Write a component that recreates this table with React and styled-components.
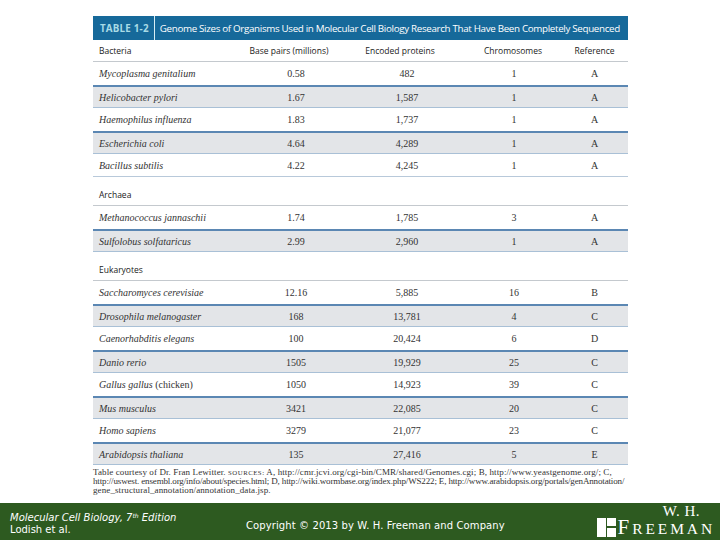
import React from "react";
import styled, { createGlobalStyle } from "styled-components";

// #region - styling -

const GlobalStyle = createGlobalStyle`
  html, body {
    margin: 0;
    padding: 0;
    background: #ffffff;
  }
  #root {
    width: 720px;
    height: 540px;
    overflow: hidden;
  }
`;

const Page = styled.div`
  width: 720px;
  height: 540px;
  display: flex;
  flex-direction: column;
  background: #ffffff;
`;

const Sheet = styled.section`
  width: 535px;
  margin: 16px 0 0 93px;
`;

const TitleBar = styled.div`
  display: flex;
  align-items: stretch;
  height: 24px;
  background: #16699a;
  font-family: "Open Sans", "Liberation Sans", sans-serif;
  font-size: 9.8px;
  white-space: nowrap;
  overflow: hidden;
`;

const TableTag = styled.div`
  display: flex;
  align-items: center;
  padding: 0 5px 0 7px;
  color: #a8dbe6;
  font-weight: 700;
  letter-spacing: 0.2px;
  border-right: 1px solid #d8eef5;
`;

const TitleText = styled.div`
  display: flex;
  align-items: center;
  padding-left: 5px;
  color: #ffffff;
  letter-spacing: -0.33px;
`;

const Row = styled.div`
  display: grid;
  grid-template-columns: 150px 92px 130px 96px 67px;
  align-items: center;
  height: ${(p) => p.$h || 23}px;
  box-sizing: border-box;
  background: ${(p) => (p.$shaded ? "#e3e5e8" : "#ffffff")};
  border-top: ${(p) => (p.$shaded ? "2px solid #5b87b3" : "none")};
  border-bottom: ${(p) =>
    p.$shaded ? "1px solid #a9c0d6" : p.$rule ? `1px solid ${p.$rule}` : "none"};
`;

const HeadCell = styled.div`
  font-family: "Open Sans", "Liberation Sans", sans-serif;
  font-size: 8.5px;
  color: #222;
  text-align: ${(p) => (p.$left ? "left" : "center")};
  padding-left: ${(p) => (p.$left ? "6px" : "0")};
  align-self: ${(p) => (p.$bottom ? "end" : "center")};
  padding-bottom: ${(p) => (p.$bottom ? "5px" : "0")};
`;

const Name = styled.div`
  font-family: "Liberation Serif", serif;
  font-style: italic;
  font-size: 10px;
  color: #333;
  padding-left: 6px;
  white-space: nowrap;
  span {
    font-style: normal;
  }
`;

const Num = styled.div`
  font-family: "Liberation Serif", serif;
  font-size: 10px;
  color: #333;
  text-align: center;
  padding-left: ${(p) => p.$shift || 0}px;
`;

const Note = styled.p`
  margin: 3px 0 0;
  font-family: "Liberation Serif", serif;
  font-size: 9px;
  line-height: 9px;
  color: #333;
  white-space: nowrap;
  letter-spacing: 0.1px;
  small {
    font-size: 6.8px;
    line-height: 9px;
    letter-spacing: 0.5px;
  }
`;

const NoteLine = styled.span`
  letter-spacing: ${(p) => p.$track}px;
`;

const Footer = styled.footer`
  margin-top: auto;
  height: 37px;
  background: #2d5a20;
  display: flex;
  align-items: center;
  color: #ffffff;
  font-family: "DejaVu Sans", Verdana, sans-serif;
  font-size: 10px;
`;

const Credit = styled.div`
  width: 236px;
  padding: 5px 0 0 10px;
  line-height: 12px;
  em {
    font-style: italic;
  }
  sup {
    font-size: 6px;
    vertical-align: top;
    line-height: 8px;
  }
`;

const Copy = styled.div`
  padding-top: 7px;
  flex: 1;
  letter-spacing: 0.1px;
`;

const Logo = styled.div`
  display: flex;
  align-items: flex-end;
  gap: 2px;
  padding: 0 7px 3px 0;
  font-family: "Liberation Serif", serif;
  align-self: stretch;
`;

const LogoWords = styled.div`
  display: flex;
  flex-direction: column;
  align-items: flex-end;
  line-height: 1;
`;

const LogoTop = styled.span`
  font-size: 15px;
  margin-right: 13px;
  letter-spacing: 0.5px;
`;

const LogoName = styled.span`
  font-size: 21px;
  letter-spacing: 2.9px;
  line-height: 17px;
  margin-right: -2px;
  span {
    font-size: 15.5px;
  }
`;
//#endregion

const bacteria = [
  ["Mycoplasma genitalium", "0.58", "482", "1", "A"],
  ["Helicobacter pylori", "1.67", "1,587", "1", "A"],
  ["Haemophilus influenza", "1.83", "1,737", "1", "A"],
  ["Escherichia coli", "4.64", "4,289", "1", "A"],
  ["Bacillus subtilis", "4.22", "4,245", "1", "A"],
];

const archaea = [
  ["Methanococcus jannaschii", "1.74", "1,785", "3", "A"],
  ["Sulfolobus solfataricus", "2.99", "2,960", "1", "A"],
];

const eukaryotes = [
  ["Saccharomyces cerevisiae", "12.16", "5,885", "16", "B"],
  ["Drosophila melanogaster", "168", "13,781", "4", "C"],
  ["Caenorhabditis elegans", "100", "20,424", "6", "D"],
  ["Danio rerio", "1505", "19,929", "25", "C"],
  ["Gallus gallus", "1050", "14,923", "39", "C", " (chicken)"],
  ["Mus musculus", "3421", "22,085", "20", "C"],
  ["Homo sapiens", "3279", "21,077", "23", "C"],
  ["Arabidopsis thaliana", "135", "27,416", "5", "E"],
];

function DataRows({ rows, lastRule }) {
  return rows.map((r, i) => {
    const shaded = i % 2 === 1;
    const last = i === rows.length - 1;
    return (
      <Row key={r[0]} $shaded={shaded} $rule={!shaded && last ? lastRule : null}>
        <Name>
          {r[0]}
          {r[5] && <span>{r[5]}</span>}
        </Name>
        <Num $shift={14}>{r[1]}</Num>
        <Num $shift={14}>{r[2]}</Num>
        <Num $shift={2}>{r[3]}</Num>
        <Num $shift={-6}>{r[4]}</Num>
      </Row>
    );
  });
}

function GroupHeading({ label }) {
  return (
    <Row $h={29} $rule="#c4c9ce">
      <HeadCell $left $bottom>
        {label}
      </HeadCell>
    </Row>
  );
}

export default function App() {
  return (
    <Page>
      <GlobalStyle />
      <Sheet>
        <TitleBar>
          <TableTag>TABLE 1-2</TableTag>
          <TitleText>
            Genome Sizes of Organisms Used in Molecular Cell Biology Research That Have Been Completely Sequenced
          </TitleText>
        </TitleBar>
        <Row $h={22} $rule="#c4c9ce">
          <HeadCell $left>Bacteria</HeadCell>
          <HeadCell>Base pairs (millions)</HeadCell>
          <HeadCell>Encoded proteins</HeadCell>
          <HeadCell>Chromosomes</HeadCell>
          <HeadCell>Reference</HeadCell>
        </Row>
        <DataRows rows={bacteria} lastRule="#b8c9da" />
        <GroupHeading label="Archaea" />
        <DataRows rows={archaea} />
        <GroupHeading label="Eukaryotes" />
        <DataRows rows={eukaryotes} />
        <Note>
          Table courtesy of Dr. Fran Lewitter. <small>SOURCES:</small> A, http://cmr.jcvi.org/cgi-bin/CMR/shared/Genomes.cgi; B, http://www.yeastgenome.org/; C,
          <br />
          <NoteLine $track={-0.15}>
            http://uswest. ensembl.org/info/about/species.html; D, http://wiki.wormbase.org/index.php/WS222; E, http://www.arabidopsis.org/portals/genAnnotation/
          </NoteLine>
          <br />
          gene_structural_annotation/annotation_data.jsp.
        </Note>
      </Sheet>
      <Footer>
        <Credit>
          <em>
            Molecular Cell Biology, 7<sup>th</sup> Edition
          </em>
          <br />
          Lodish et al.
        </Credit>
        <Copy>Copyright © 2013 by W. H. Freeman and Company</Copy>
        <Logo>
          <svg width="19" height="19" viewBox="0 0 19 19">
            <rect x="0" y="0" width="9" height="19" fill="#ffffff" />
            <rect x="10" y="0" width="9" height="8" fill="#ffffff" />
            <rect x="10" y="10" width="9" height="9" fill="#ffffff" />
          </svg>
          <LogoWords>
            <LogoTop>W. H.</LogoTop>
            <LogoName>
              F<span>REEMAN</span>
            </LogoName>
          </LogoWords>
        </Logo>
      </Footer>
    </Page>
  );
}
